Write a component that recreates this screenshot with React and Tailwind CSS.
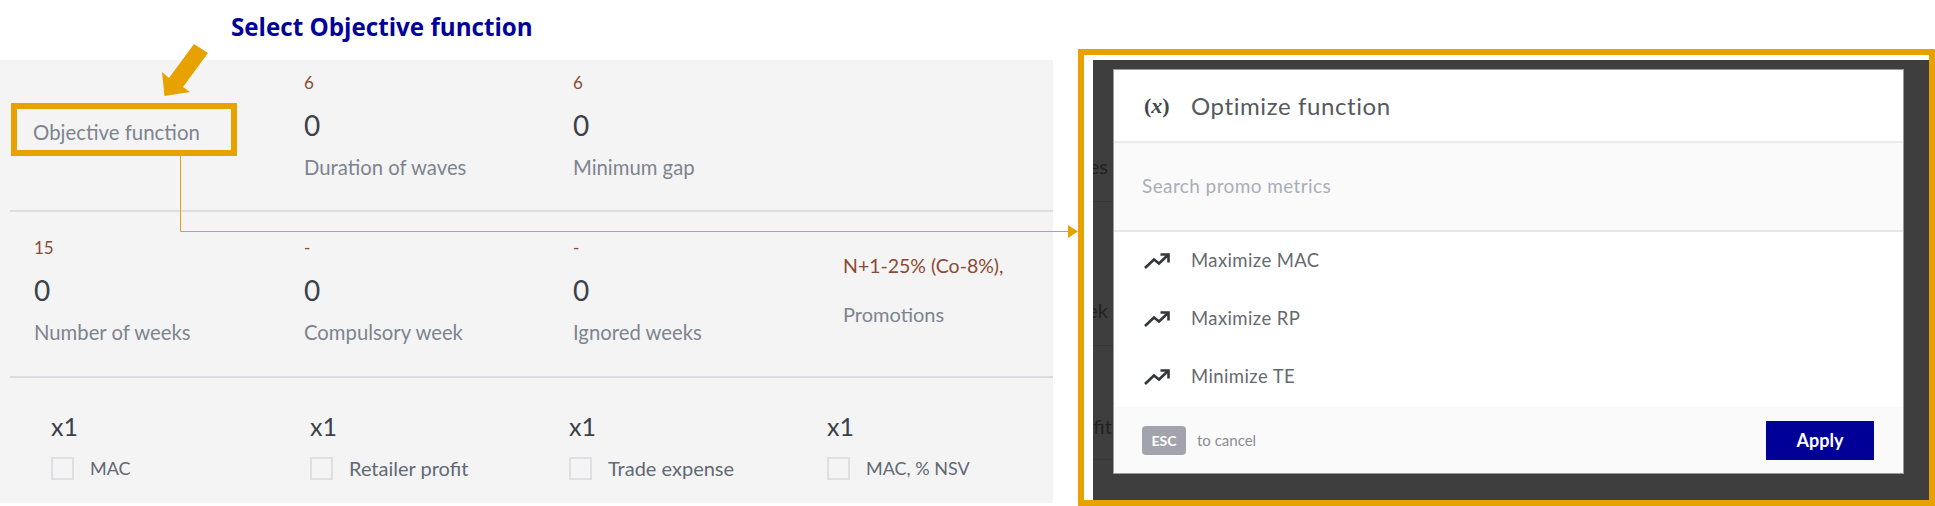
import React from 'react';

const font = { fontFamily: 'Lato, "Open Sans", sans-serif' };

const Stat = ({ top, value, label }) => (
  <div className="flex flex-col">
    <div className="h-[20px] text-[17px] leading-[20px] text-[#8b4a35]">{top}</div>
    <div className="mt-[16px] h-[32px] text-[28px] leading-[32px] text-[#3c424b]">{value}</div>
    <div className="mt-[14px] h-[24px] text-[20.3px] leading-[24px] text-[#7d8490]">{label}</div>
  </div>
);

const Check = ({ label, size }) => (
  <div className="flex flex-col">
    <div className="h-[32px] text-[25px] leading-[32px] text-[#3c424b]">x1</div>
    <div className="mt-[14px] flex items-center gap-[16px]">
      <div className="h-[23px] w-[23px] border-2 border-[#dfdfe2]" />
      <span className={`leading-[24px] text-[#626974] ${size}`}>{label}</span>
    </div>
  </div>
);

const TrendIcon = () => (
  <svg width="26" height="16" viewBox="0 0 26 16" fill="none" stroke="#33363b" strokeWidth="2.6">
    <polyline points="1,15 10,6.5 15,10.5 24,2" />
    <polyline points="16.5,1.5 24.5,1.5 24.5,9.5" />
  </svg>
);

const MetricItem = ({ label }) => (
  <div className="flex h-[58px] items-center pl-[30px]">
    <div className="w-[47px]"><TrendIcon /></div>
    <span className="text-[18.5px] tracking-[0.4px] text-[#666a70]">{label}</span>
  </div>
);

const BackdropRow = ({ text, height, pad }) => (
  <div className={`flex items-end justify-end overflow-hidden border-b border-[#363636] ${height} ${pad}`}>
    <span className="whitespace-nowrap text-[20px] leading-[24px] text-[#222222]">{text}</span>
  </div>
);

export default function App() {
  return (
    <div className="relative flex h-[506px] w-[1935px] overflow-hidden bg-white" style={font}>
      {/* left side */}
      <div className="w-[1053px] shrink-0">
        <div className="flex h-[60px] pl-[231px] pt-[10px]">
          <span
            className="text-[24.2px] font-bold leading-[34px] text-[#00009a]"
            style={{ fontFamily: '"Open Sans", sans-serif' }}
          >
            Select Objective function
          </span>
        </div>

        <div className="h-[443px] bg-[#f4f4f4] pl-[10px]">
          {/* first row */}
          <div className="grid h-[152px] grid-cols-[270px_269px_1fr] border-b-2 border-[#dedede] pl-[24px] pt-[13px]">
            <div>
              <div className="-ml-[23px] mt-[30px] flex h-[53px] w-[226px] items-center border-[6px] border-[#e8a200] pl-[16px] pt-[5px] text-[20.4px] text-[#7d8490]">
                Objective function
              </div>
            </div>
            <Stat top="6" value="0" label="Duration of waves" />
            <Stat top="6" value="0" label="Minimum gap" />
          </div>

          {/* second row */}
          <div className="grid h-[166px] grid-cols-[270px_269px_270px_1fr] border-b-2 border-[#d9dce0] pl-[24px] pt-[26px]">
            <Stat top="15" value="0" label="Number of weeks" />
            <Stat top="-" value="0" label="Compulsory week" />
            <Stat top="-" value="0" label="Ignored weeks" />
            <div className="flex flex-col pt-[16px]">
              <div className="h-[24px] text-[19.5px] leading-[24px] text-[#8b4a35]">N+1-25% (Co-8%),</div>
              <div className="mt-[24px] h-[24px] text-[20px] leading-[24px] text-[#7d8490]">Promotions</div>
            </div>
          </div>

          {/* third row */}
          <div className="grid grid-cols-[259px_259px_258px_1fr] pl-[41px] pt-[32px]">
            <Check label="MAC" size="text-[18px]" />
            <Check label="Retailer profit" size="text-[20px]" />
            <Check label="Trade expense" size="text-[20px]" />
            <Check label="MAC, % NSV" size="text-[18px]" />
          </div>
        </div>
      </div>

      {/* framed modal */}
      <div className="ml-[25px] mt-[49px] h-[457px] w-[857px] shrink-0 border-[6px] border-[#e8a200] bg-white pl-[9px] pt-[5px]">
        <div className="relative h-[440px] w-full bg-[#3e3e3e]">
          <div className="w-[20px]">
            <BackdropRow text="es" height="h-[142px]" pad="pb-[23px] pr-[5px]" />
            <BackdropRow text="ek" height="h-[144px]" pad="pb-[23px] pr-[5px]" />
            <BackdropRow text="ofit" height="h-[114px]" pad="pb-[21px] pr-[1px]" />
          </div>

          <div className="absolute left-[20px] top-[9px] flex h-[405px] w-[791px] flex-col border border-[#9a9a9a] bg-white">
            <div className="flex h-[73px] items-center border-b-2 border-[#ebebeb] pl-[30px]">
              <span
                className="w-[47px] text-[22px] font-bold text-[#44474c]"
                style={{ fontFamily: '"Liberation Serif", serif' }}
              >
                (<i>x</i>)
              </span>
              <span className="text-[24px] tracking-[0.6px] text-[#555a60]">Optimize function</span>
            </div>
            <div className="flex h-[89px] items-center border-b-2 border-[#e8e8e8] bg-[#fafafa] pl-[28px] text-[19px] tracking-[0.4px] text-[#a9aeb9]">
              Search promo metrics
            </div>
            <div className="flex h-[175px] flex-col">
              <MetricItem label="Maximize MAC" />
              <MetricItem label="Maximize RP" />
              <MetricItem label="Minimize TE" />
            </div>
            <div className="flex flex-1 items-center justify-between bg-[#fafafa] pl-[28px] pr-[29px]">
              <div className="flex items-center gap-[11px]">
                <div className="flex h-[29px] w-[44px] items-center justify-center rounded-[4px] bg-[#a2a3ad] text-[14px] font-bold text-white">
                  ESC
                </div>
                <span className="text-[15px] text-[#8a8d93]">to cancel</span>
              </div>
              <button className="h-[39px] w-[108px] bg-[#000099] text-[18px] font-bold text-white">Apply</button>
            </div>
          </div>
        </div>
      </div>

      {/* annotations */}
      <svg className="pointer-events-none absolute left-0 top-0" width="1935" height="506">
        <polygon points="194,44 208,53 183,87 190,92 164.5,96 162,72 169,78" fill="#e8a200" />
        <polyline points="180.5,156 180.5,231.5 1068,231.5" fill="none" stroke="#e8a200" strokeWidth="1" />
        <polygon points="1068,225 1078,231.5 1068,238" fill="#e8a200" />
      </svg>
    </div>
  );
}
